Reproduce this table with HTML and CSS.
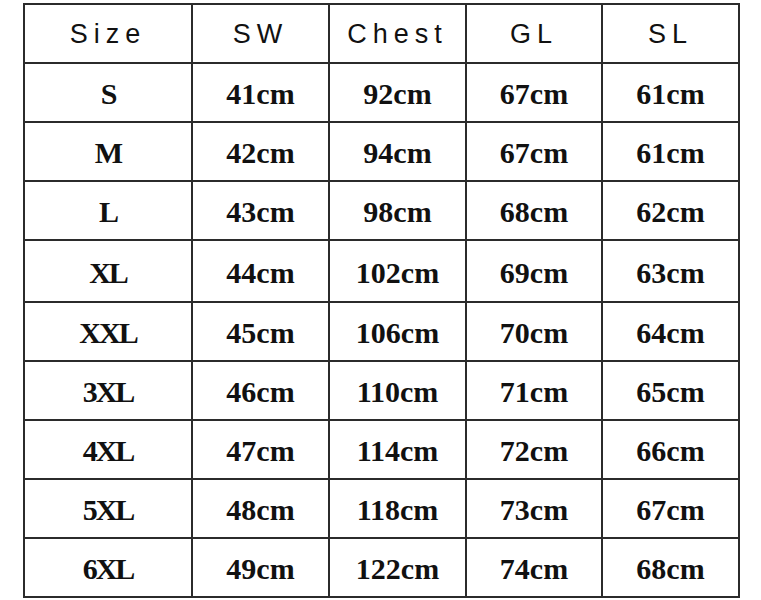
FILE: index.html
```html
<!DOCTYPE html>
<html>
<head>
<meta charset="utf-8">
<link rel="stylesheet" href="styles.css">
</head>
<body>
<table class="size-table">
  <thead>
    <tr>
      <th class="col-size">Size</th>
      <th class="col-sw">SW</th>
      <th class="col-chest">Chest</th>
      <th class="col-gl">GL</th>
      <th class="col-sl head-sl">SL</th>
    </tr>
  </thead>
  <tbody>
    <tr><td class="size">S</td><td>41cm</td><td>92cm</td><td>67cm</td><td>61cm</td></tr>
    <tr><td class="size">M</td><td>42cm</td><td>94cm</td><td>67cm</td><td>61cm</td></tr>
    <tr><td class="size">L</td><td>43cm</td><td>98cm</td><td>68cm</td><td>62cm</td></tr>
    <tr class="tall"><td class="size">XL</td><td>44cm</td><td>102cm</td><td>69cm</td><td>63cm</td></tr>
    <tr><td class="size">XXL</td><td>45cm</td><td>106cm</td><td>70cm</td><td>64cm</td></tr>
    <tr><td class="size">3XL</td><td>46cm</td><td>110cm</td><td>71cm</td><td>65cm</td></tr>
    <tr><td class="size">4XL</td><td>47cm</td><td>114cm</td><td>72cm</td><td>66cm</td></tr>
    <tr><td class="size">5XL</td><td>48cm</td><td>118cm</td><td>73cm</td><td>67cm</td></tr>
    <tr><td class="size">6XL</td><td>49cm</td><td>122cm</td><td>74cm</td><td>68cm</td></tr>
  </tbody>
</table>
</body>
</html>
```

FILE: styles.css
```css
html, body {
  margin: 0;
  padding: 0;
  background: #ffffff;
}

body {
  padding: 3px 0 0 23px;
}

.size-table {
  border-collapse: separate;
  border-spacing: 0;
  table-layout: fixed;
  width: 717px;
  border-top: 2px solid #2b2b2b;
  border-left: 2px solid #2b2b2b;
}

.size-table th,
.size-table td {
  border-right: 2px solid #2b2b2b;
  border-bottom: 2px solid #2b2b2b;
  padding: 0;
  height: 57px;
  text-align: center;
  vertical-align: middle;
  color: #111;
}

.size-table th {
  font-family: "Liberation Sans", Arial, sans-serif;
  font-weight: normal;
  font-size: 27px;
  letter-spacing: 6px;
  padding-top: 2px;
  height: 55px;
}

.col-size { width: 166px; }
.col-sw { width: 135px; }
.col-chest { width: 135px; }
.col-gl { width: 134px; }
.col-sl { width: 135px; }

.head-sl {
  padding-right: 14px;
}

.col-chest,
.col-gl {
  padding-left: 6px;
}

.size-table td {
  font-family: "Liberation Serif", "Times New Roman", serif;
  font-weight: bold;
  font-size: 30px;
  padding-top: 3px;
  height: 54px;
}

.size-table td.size {
  letter-spacing: -2px;
}

.size-table tr.tall td {
  height: 57px;
}
```
